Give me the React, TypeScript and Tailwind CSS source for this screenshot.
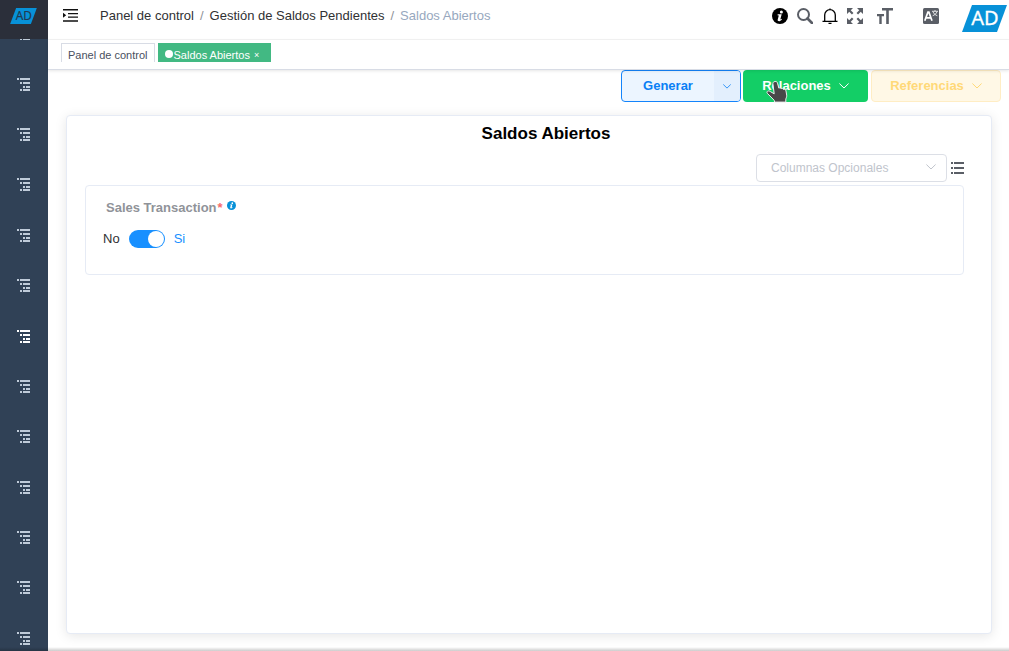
import React from 'react';

const entries = Array.from({ length: 13 }, (_, i) => `Menú ${i + 1}`);

function TreeIcon() {
  return (
    <svg width="14" height="14" viewBox="0 0 14 14" fill="currentColor" shapeRendering="crispEdges" aria-hidden="true">
      <path d="M0 0h2v2H0zM3 0h10v2H3zM3 4h2v2H3zM6 4h7v2H6zM6 8h2v2H6zM9 8h4v2H9zM3 11h2v2H3zM6 11h7v2H6z" />
    </svg>
  );
}

function Chevron({ className }: { className?: string }) {
  return (
    <svg className={className} width="10" height="6" viewBox="0 0 10 6" fill="none" stroke="currentColor" strokeWidth="1" strokeLinecap="round" aria-hidden="true">
      <path d="M0.7 0.8 5 5 9.3 0.8" />
    </svg>
  );
}

function AdLogo({ className, textFill }: { className: string; textFill: string }) {
  return (
    <svg className={className} viewBox="0 0 45 27" role="img" aria-label="AD">
      <path d="M10 0H45L35 27H0Z" fill="#0791d8" />
      <text x="23" y="20" textAnchor="middle" fontFamily="Noto Sans, Open Sans, sans-serif" fontSize="20" fill={textFill} stroke={textFill} strokeWidth="0.3">AD</text>
    </svg>
  );
}

function InfoIcon({ className }: { className: string }) {
  return (
    <svg className={className} viewBox="0 0 16 16" aria-hidden="true">
      <circle cx="8" cy="8" r="8" fill="currentColor" />
      <circle cx="9.400" cy="3.900" r="1.500" fill="#fff" />
      <path d="M5.700 6.300h4L8.300 11.400l1.300-.7.3.7C8.700 12.900 7.200 13.500 6.300 13.100c-.8-.4-.7-1.200-.5-1.900L6.800 7.500l-1.300-.2Z" fill="#fff" />
    </svg>
  );
}

const iconButton = 'flex h-6 shrink-0 items-center justify-center';

export default function App() {
  return (
    <div className="flex h-screen overflow-hidden bg-white font-['Liberation_Sans',Arial,sans-serif] text-[13px] leading-4 text-[#303133]">
      <aside className="flex w-12 shrink-0 flex-col bg-[#304156]">
        <a href="#inicio" aria-label="Inicio" className="flex h-[39px] shrink-0 bg-[#2b2f3a] pt-2 pl-[10px]">
          <AdLogo className="h-4 w-[27px]" textFill="#21394f" />
        </a>
        <nav className="min-h-0 flex-1 overflow-hidden">
          <ul className="-mt-[30px] flex h-[calc(100%+43px)] flex-col">
            {entries.map((name, i) => (
              <li key={name} className="flex-1">
                <a href={`#menu-${i + 1}`} aria-label={name} className={`flex h-full items-center justify-center ${i === 6 ? 'text-white' : 'text-[#bfcbd9]'}`}>
                  <TreeIcon />
                </a>
              </li>
            ))}
          </ul>
        </nav>
      </aside>

      <div className="flex min-w-0 flex-1 flex-col">
        <header className="flex h-10 shrink-0 items-start border-b border-[#f4f4f4] pt-1 pl-[14px]">
          <button type="button" aria-label="Contraer menú" className="mt-[3px] flex h-4 w-4 items-center justify-end">
            <svg width="15" height="13" viewBox="0 0 15 13" fill="#111" aria-hidden="true">
              <path d="M0 0h15v1.500H0zM5 4h10v1.300H5zM5 7.500h10v1.300H5zM0 11.300h15v1.500H0zM0 3.800v5l3.200-2.500z" />
            </svg>
          </button>
          <nav aria-label="Ruta" className="ml-[22px] flex pt-1">
            <a href="#panel">Panel de control</a>
            <span className="mx-[6px] text-[#909399]">/</span>
            <a href="#gestion">Gestión de Saldos Pendientes</a>
            <span className="mx-[6px] text-[#909399]">/</span>
            <span className="text-[#97a8be]">Saldos Abiertos</span>
          </nav>
          <div className="ml-auto flex text-[#5a5e66]">
            <button type="button" aria-label="Información" className={`${iconButton} w-[25px] text-black`}>
              <InfoIcon className="h-4 w-4" />
            </button>
            <button type="button" aria-label="Buscar" className={`${iconButton} w-[25px]`}>
              <svg width="16" height="16" viewBox="0 0 16 16" fill="none" stroke="currentColor" aria-hidden="true">
                <circle cx="6.500" cy="6.500" r="5.500" strokeWidth="2" />
                <path d="M10.500 10.500 15 15" strokeWidth="2.600" strokeLinecap="round" />
              </svg>
            </button>
            <button type="button" aria-label="Notificaciones" className={`${iconButton} w-[25px] text-black`}>
              <svg width="16" height="16" viewBox="0 0 16 16" fill="none" stroke="currentColor" strokeWidth="1.300" aria-hidden="true">
                <path d="M0.500 13.400h15M2.700 13.400V7a5.300 5.300 0 0 1 10.600 0v6.400M8 2V.5M6.500 15.300h3" />
              </svg>
            </button>
            <button type="button" aria-label="Pantalla completa" className={`${iconButton} w-[25px]`}>
              <svg width="16" height="16" viewBox="0 0 16 16" fill="currentColor" stroke="currentColor" aria-hidden="true">
                <path stroke="none" d="M0 0h6L0 6zM16 0v6L10 0zM0 16v-6L6 16zM16 16h-6l6-6z" />
                <path strokeWidth="2.200" d="m1.500 1.500 4.200 4.200M14.500 1.500 10.300 5.700M1.500 14.500l4.200-4.200M14.500 14.500l-4.200-4.200" />
              </svg>
            </button>
            <button type="button" aria-label="Tamaño del texto" className={`${iconButton} w-9`}>
              <svg width="16" height="16" viewBox="0 0 16 16" fill="currentColor" aria-hidden="true">
                <path d="M5 0h11v2.400h-4.200V16H9.200V2.400H5zM0 6h7v2.200H4.700V16H2.300V8.200H0z" />
              </svg>
            </button>
            <button type="button" aria-label="Idioma" className={`${iconButton} ml-[5px] w-[46px]`}>
              <svg width="16" height="16" viewBox="0 0 16 16" aria-hidden="true">
                <rect width="16" height="16" rx="1.500" fill="currentColor" />
                <path d="m1.800 12.700 3.100-8.500h1l3.100 8.500M3.200 9.800h4.400" fill="none" stroke="#fff" strokeWidth="1.700" />
                <path d="M9 3.300h6M12 2v1.300M10 3.700c.7 2 2.500 3.400 4.300 4M14 3.700c-.7 2-2.500 3.400-4.300 4" fill="none" stroke="#fff" strokeWidth=".8" />
              </svg>
            </button>
            <button type="button" aria-label="Perfil" className="ml-2 flex items-start pt-[1px]">
              <AdLogo className="mr-[2px] h-[27px] w-[45px]" textFill="#fff" />
            </button>
          </div>
        </header>

        <nav aria-label="Pestañas" className="relative z-10 flex h-[30px] shrink-0 items-start border-b border-[#d8dce5] bg-white pt-[3px] pl-[13px] text-[11px] shadow-[0_1px_3px_rgba(0,0,0,0.1)]">
          <a href="#panel" className="flex h-[19px] items-start border border-b-0 border-[#d8dce5] px-[6px] pt-[3px] text-[#495060]">Panel de control</a>
          <div className="ml-[3px] flex h-[19px] items-start bg-[#42b983] pr-3 pl-[7px] pt-1 text-white">
            <span className="mt-[3px] mr-[1px] h-2 w-2 rounded-full bg-white" />
            <a href="#saldos">Saldos Abiertos</a>
            <button type="button" aria-label="Cerrar pestaña" className="ml-1 text-[9px] leading-4">×</button>
          </div>
        </nav>

        <main className="flex min-h-0 flex-1 flex-col">
          <div className="flex h-8 shrink-0 justify-end pr-2 text-[13px] font-bold">
            <div className="flex w-[120px] overflow-hidden rounded-[4px] border border-[#1484fb] bg-[#ecf5ff] text-[#0a7ff5]">
              <button type="button" className="flex-1 font-bold">Generar</button>
              <button type="button" aria-label="Más opciones" className="flex w-[26px] items-center justify-center bg-[#e3effd]"><Chevron className="h-[5px] w-2" /></button>
            </div>
            <button type="button" className="relative ml-[2px] flex w-[125px] items-center justify-center gap-2 rounded-[4px] bg-[#13ce66] font-bold text-white">
              Relaciones <Chevron />
              <svg className="absolute top-[10px] left-[23px]" width="22" height="23" viewBox="0 0 22 23" aria-hidden="true">
                <path d="M9 1.500c1.300-.3 2.200.4 2.500 1.600l1.300 5c.9-.5 1.800-.2 2.300.6 1-.5 1.900-.1 2.400.8 1.400-.5 2.200.2 2.500 1.500l.7 4.200c.2 1.500-.5 2.600-.9 3.900v3H8.600l-.4-1.800L1.500 13.500c-.7-.8-.7-1.700 0-2.200.9-.6 1.900-.3 2.700.2l4 2.300L6.900 3.600C6.700 2.500 7.700 1.700 9 1.500Z" fill="#484848" stroke="#eee" strokeWidth="1" />
              </svg>
            </button>
            <button type="button" disabled className="ml-[3px] flex w-[130px] items-center justify-center gap-2 rounded-[4px] border border-[#ffedc4] bg-[#fff8e6] font-bold text-[#ffd978]">
              Referencias <Chevron />
            </button>
          </div>

          <section className="mt-[13px] mr-[17px] mb-[17px] ml-[18px] flex min-h-0 flex-1 flex-col rounded-[4px] border border-[#e6ebf5] bg-white px-[18px] shadow-[0_2px_12px_rgba(0,0,0,0.1)]">
            <h1 className="mt-2 pl-[34px] text-center text-[17px] leading-5 font-bold text-black">Saldos Abiertos</h1>
            <div className="mt-[10px] flex h-7 shrink-0 items-center justify-end">
              <div className="relative mr-1 h-7 w-[191px]">
                <select aria-label="Columnas Opcionales" defaultValue="" className="h-full w-full appearance-none rounded-[4px] border border-[#dcdfe6] bg-white px-[14px] text-[12px] text-[#c0c4cc]">
                  <option value="">Columnas Opcionales</option>
                </select>
                <Chevron className="pointer-events-none absolute top-[10px] right-[11px] text-[#c0c4cc]" />
              </div>
              <button type="button" aria-label="Lista de campos" className="mr-[9px] text-[#5a5e66]">
                <svg width="13" height="12" viewBox="0 0 13 12" fill="currentColor" aria-hidden="true">
                  <path d="M0 0h2v2H0zM3 0h10v2H3zM0 5h2v2H0zM3 5h10v2H3zM0 10h2v2H0zM3 10h10v2H3z" />
                </svg>
              </button>
            </div>
            <form className="mt-[3px] mr-[9px] h-[90px] rounded-[4px] border border-[#e6ebf5] px-[17px] pt-[14px]">
              <label htmlFor="sales" className="flex pl-[3px] font-bold text-[#909399]">
                Sales Transaction
                <span className="ml-[1px] text-[#f56c6c]">*</span>
                <InfoIcon className="ml-1 mt-[1px] h-[9px] w-[9px] text-[#0791d8]" />
              </label>
              <div className="mt-[13px] flex h-5 items-center">
                <span>No</span>
                <input id="sales" type="checkbox" role="switch" defaultChecked className="mx-[9px] h-[18px] w-9 appearance-none rounded-full bg-[#c0ccda] before:block before:h-4 before:w-4 before:translate-x-[1px] before:translate-y-[1px] before:rounded-full before:bg-white checked:bg-[#1890ff] checked:before:translate-x-[19px]" />
                <span className="text-[#1890ff]">Si</span>
              </div>
            </form>
          </section>
        </main>
        <div className="-ml-12 -mt-1 h-1 shrink-0 bg-linear-to-b from-black/0 to-black/20" />
      </div>
    </div>
  );
}
